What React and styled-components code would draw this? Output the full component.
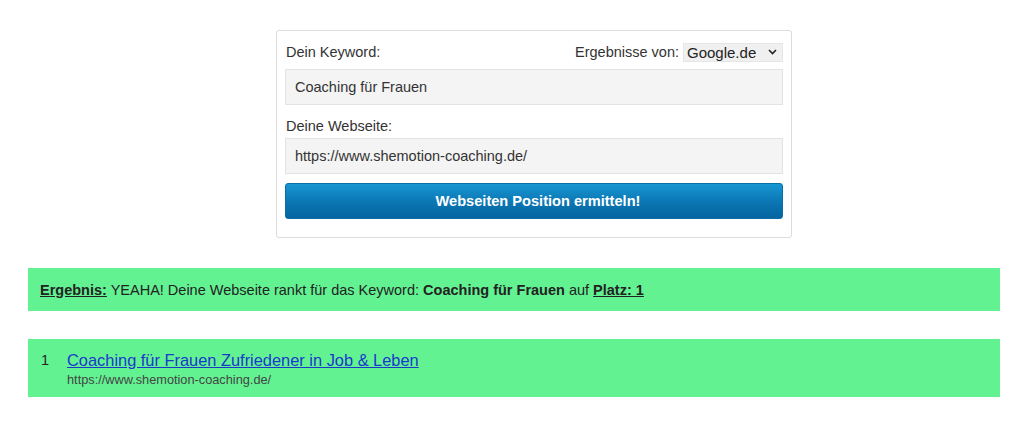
import React from "react";
import styled, { createGlobalStyle } from "styled-components";

const GlobalStyle = createGlobalStyle`
  body {
    margin: 0;
    background: #ffffff;
    font-family: "Liberation Sans", Arial, sans-serif;
    color: #333333;
  }
`;

const Page = styled.div`
  padding: 30px 24px 0 28px;
`;

const Card = styled.form`
  box-sizing: border-box;
  width: 516px;
  margin-left: 248px;
  padding: 9px 8px 18px;
  border: 1px solid #dcdcdc;
  border-radius: 3px;
  background: #ffffff;
`;

const HeaderRow = styled.div`
  display: flex;
  justify-content: space-between;
  align-items: center;
  height: 24px;
  padding-left: 1px;
`;

const Label = styled.label`
  display: block;
  font-size: 14.5px;
  color: #333;
  padding: ${({ $top }) => ($top ? "13px 0 3px 1px" : "0")};
  line-height: 17px;
`;

const SourcePicker = styled.div`
  display: flex;
  align-items: center;
  gap: 4px;
  font-size: 14.5px;
`;

const Select = styled.div`
  box-sizing: border-box;
  display: flex;
  align-items: center;
  justify-content: space-between;
  width: 100px;
  height: 19px;
  padding: 0 5px 0 3px;
  background: #f0f0f0;
  border: 1px solid #e6e6e6;
  font-size: 15px;
  color: #222;
`;

const TextInput = styled.div`
  box-sizing: border-box;
  display: flex;
  align-items: center;
  height: 36px;
  margin-top: ${({ $gap }) => $gap || 0}px;
  padding: 0 9px;
  background: #f4f4f4;
  border: 1px solid #e3e3e3;
  font-size: 14.5px;
  color: #333;
`;

const Button = styled.button`
  box-sizing: border-box;
  width: 100%;
  height: 36px;
  margin-top: 9px;
  padding: 0 0 0 8px;
  border: 1px solid #0a6ea6;
  border-radius: 3px;
  background: linear-gradient(#1696d2, #0a73b0 60%, #0565a0);
  color: #ffffff;
  font-family: "Liberation Sans", Arial, sans-serif;
  font-weight: bold;
  font-size: 14.6px;
`;

const ResultBar = styled.div`
  box-sizing: border-box;
  width: 972px;
  background: #63f292;
  color: #222;
  margin-top: ${({ $top }) => $top}px;
`;

const Summary = styled(ResultBar)`
  display: flex;
  align-items: center;
  height: 43px;
  padding-left: 12px;
  font-size: 14.5px;
  white-space: pre;
`;

const Mark = styled.span`
  font-weight: bold;
  text-decoration: underline;
`;

const Hit = styled(ResultBar)`
  display: flex;
  height: 58px;
  padding: 11px 0 0 13px;
`;

const Rank = styled.span`
  width: 26px;
  font-size: 14.5px;
  line-height: 20px;
`;

const HitBody = styled.div`
  display: flex;
  flex-direction: column;
`;

const HitTitle = styled.a`
  font-size: 16.4px;
  line-height: 20px;
  color: #1a39cc;
  text-decoration: underline;
`;

const HitUrl = styled.span`
  margin-top: 2px;
  font-size: 12.75px;
  line-height: 16px;
  color: #444;
`;

const Chevron = () => (
  <svg width="9" height="6" viewBox="0 0 9 6">
    <path d="M1 1l3.5 3.5L8 1" fill="none" stroke="#222" strokeWidth="1.6" />
  </svg>
);

export default function App() {
  return (
    <>
      <GlobalStyle />
      <Page>
        <Card onSubmit={(e) => e.preventDefault()}>
          <HeaderRow>
            <Label>Dein Keyword:</Label>
            <SourcePicker>
              <span>Ergebnisse von:</span>
              <Select>
                <span>Google.de</span>
                <Chevron />
              </Select>
            </SourcePicker>
          </HeaderRow>
          <TextInput $gap={5}>Coaching für Frauen</TextInput>
          <Label $top>Deine Webseite:</Label>
          <TextInput>https://www.shemotion-coaching.de/</TextInput>
          <Button type="submit">Webseiten Position ermitteln!</Button>
        </Card>
        <Summary $top={30}>
          <Mark>Ergebnis:</Mark> YEAHA! Deine Webseite rankt für das Keyword:{" "}
          <b>Coaching für Frauen</b> auf <Mark>Platz: 1</Mark>
        </Summary>
        <Hit $top={28}>
          <Rank>1</Rank>
          <HitBody>
            <HitTitle href="#">Coaching für Frauen Zufriedener in Job &amp; Leben</HitTitle>
            <HitUrl>https://www.shemotion-coaching.de/</HitUrl>
          </HitBody>
        </Hit>
      </Page>
    </>
  );
}
